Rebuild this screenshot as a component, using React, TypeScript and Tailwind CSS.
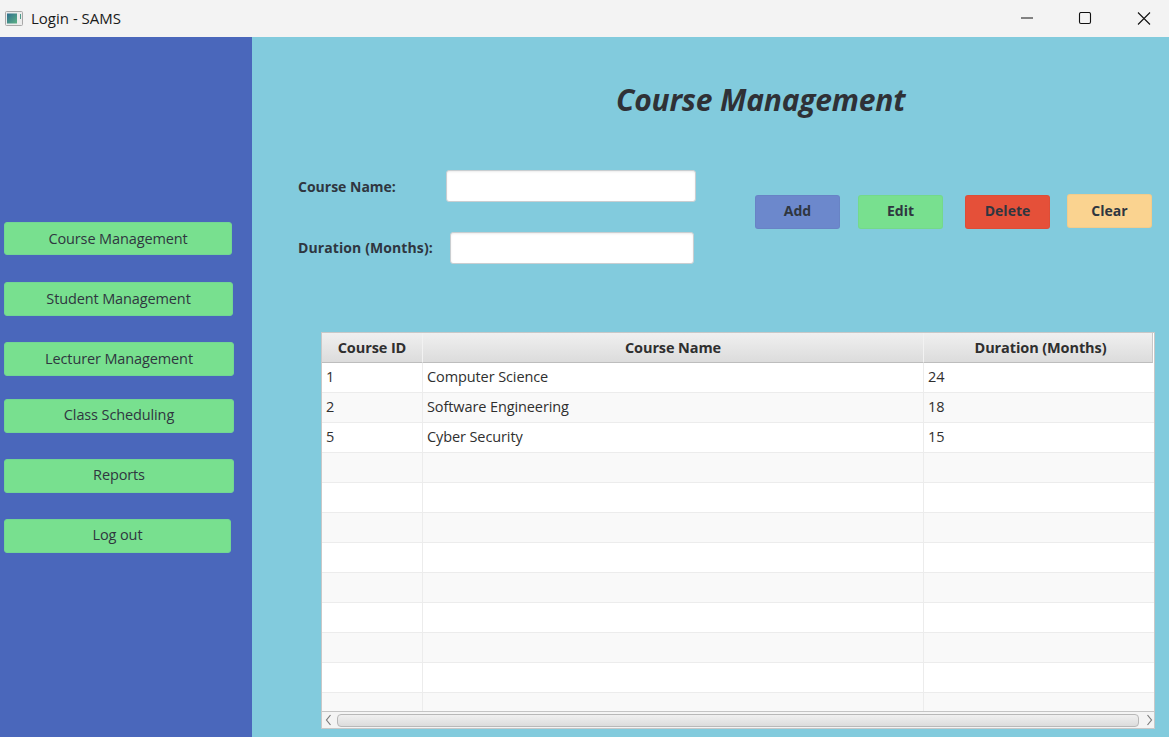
const F = "font-['Open_Sans','Noto_Sans',sans-serif]";

const side = [
  { t: "Course Management", c: "mt-[185px] w-[228px] h-[33px]" },
  { t: "Student Management", c: "mt-[27px] w-[229px] h-[34px]" },
  { t: "Lecturer Management", c: "mt-[26px] w-[230px] h-[34px]" },
  { t: "Class Scheduling", c: "mt-[23px] w-[230px] h-[34px] pb-[2px]" },
  { t: "Reports", c: "mt-[26px] w-[230px] h-[34px] pb-[2px]" },
  { t: "Log out", c: "mt-[26px] w-[227px] h-[34px] pb-[2px]" },
];

const rows: string[][] = [
  ["1", "Computer Science", "24"],
  ["2", "Software Engineering", "18"],
  ["5", "Cyber Security", "15"],
  ["", "", ""], ["", "", ""], ["", "", ""], ["", "", ""], ["", "", ""], ["", "", ""], ["", "", ""], ["", "", ""], ["", "", ""],
];

function TitleBar() {
  return (
    <div className="h-[37px] shrink-0 bg-[#f3f3f3] flex items-center pl-[5px]">
      <svg width="18" height="15" viewBox="0 0 18 15" className="shrink-0">
        <rect x="0.5" y="0.5" width="17" height="14" rx="1" fill="#ececec" stroke="#a8a8a8" />
        <defs>
          <linearGradient id="ic" x1="0" y1="0" x2="1" y2="1">
            <stop offset="0" stopColor="#2f6f8f" />
            <stop offset="1" stopColor="#5cb184" />
          </linearGradient>
        </defs>
        <rect x="2" y="2.5" width="10" height="10" fill="url(#ic)" />
        <rect x="15" y="3" width="1" height="5" fill="#4f9a8a" />
      </svg>
      <span className="ml-[8px] text-[15px] text-[#1a1a1a]">Login - SAMS</span>
      <div className="ml-auto flex items-center">
        <svg width="14" height="14" viewBox="0 0 14 14" className="mr-[44px]"><path d="M1 6h12" stroke="#111" strokeWidth="1" /></svg>
        <svg width="14" height="14" viewBox="0 0 14 14" className="mr-[45px]"><rect x="1.5" y="0.5" width="11" height="11" rx="1.5" fill="none" stroke="#111" strokeWidth="1.1" /></svg>
        <svg width="14" height="14" viewBox="0 0 14 14" className="mr-[18px]"><path d="M1 0.5l12 12M13 0.5L1 12.5" stroke="#111" strokeWidth="1.1" /></svg>
      </div>
    </div>
  );
}

function Sidebar() {
  return (
    <div className="w-[252px] shrink-0 bg-[#4a67bb] flex flex-col pl-[4px]">
      {side.map((s) => (
        <button key={s.t} className={`${s.c} shrink-0 rounded-[3px] bg-[#78e08f] border border-[#72d793] text-[14.5px] tracking-[-0.12px] text-[#2f3640] flex items-center justify-center`}>
          {s.t}
        </button>
      ))}
    </div>
  );
}

function Input({ c }: { c: string }) {
  return <div className={`${c} h-[32px] rounded-[3px] bg-white border border-[#c9ced1] shadow-[inset_0_1px_2px_rgba(0,0,0,0.08)]`} />;
}

function Action({ t, c }: { t: string; c: string }) {
  return (
    <button className={`${c} w-[85px] h-[34px] rounded-[3px] border border-black/[0.03] text-[14px] font-bold text-[#2f3640] flex items-center justify-center`}>
      {t}
    </button>
  );
}

function Chevron({ d, c }: { d: string; c?: string }) {
  return <svg width="7" height="12" viewBox="0 0 7 12" className={c}><path d={d} fill="none" stroke="#7a7a7a" strokeWidth="1.2" /></svg>;
}

function Table() {
  const cols = ["w-[101px]", "w-[501px]", "flex-1 pl-[5px]"];
  const heads = ["Course ID", "Course Name", "Duration (Months)"];
  const bodyCols = ["w-[101px]", "w-[501px]", "flex-1"];
  return (
    <div className="ml-[69px] w-[834px] h-[397px] bg-white border border-[#c8c8c8] flex flex-col overflow-hidden">
      <div className="h-[30px] shrink-0 flex pr-[1px] bg-white">
        {heads.map((h, i) => (
          <div key={h} className={`${cols[i]} ${i === 2 ? "border-r border-r-[#c8c8c8]" : "border-r border-r-[#f2f2f2]"} border-b border-b-[#bdbdbd] bg-gradient-to-b from-[#f0f0f0] to-[#dcdcdc] flex items-center justify-center text-[14.5px] font-bold tracking-[-0.1px] text-[#2f2f2f]`}>
            {h}
          </div>
        ))}
      </div>
      <div className="flex-1 min-h-0 overflow-hidden">
        {rows.map((r, i) => (
          <div key={i} className={`h-[30px] flex border-b border-b-[#ececec] ${i % 2 === 0 ? "bg-white" : "bg-[#f9f9f9]"}`}>
            {r.map((v, j) => (
              <div key={j} className={`${bodyCols[j]} ${j < 2 ? "border-r border-r-[#ececec]" : ""} pl-[4px] pb-[2px] flex items-center text-[14.5px] tracking-[-0.1px] text-[#2f2f2f]`}>
                {v}
              </div>
            ))}
          </div>
        ))}
      </div>
      <div className="h-[17px] shrink-0 bg-[#f4f4f4] border-t border-t-[#c4c4c4] flex items-center pl-[3px]">
        <Chevron d="M5.5 1L1.5 6L5.5 11" />
        <div className="ml-[5px] h-[13px] w-[802px] rounded-[4px] border border-[#b8b8b8] bg-gradient-to-b from-[#f0f0f0] to-[#dcdcdc]" />
        <Chevron c="ml-[7px]" d="M1.5 1L5.5 6L1.5 11" />
      </div>
    </div>
  );
}

export default function App() {
  return (
    <div className={`${F} w-[1169px] h-[737px] flex flex-col overflow-hidden`}>
      <TitleBar />
      <div className="flex-1 min-h-0 flex">
        <Sidebar />
        <div className="flex-1 bg-[#82cbdd] flex flex-col">
          <h1 className="mt-[43px] ml-[364px] h-[40px] flex items-center text-[30px] leading-none font-bold italic tracking-[-0.2px] text-[#2f3136]">
            Course Management
          </h1>
          <div className="mt-[50px] flex">
            <div className="ml-[46px] flex flex-col">
              <div className="flex items-center">
                <span className="w-[148px] text-[14px] font-bold text-[#2f3640]">Course Name:</span>
                <Input c="w-[250px]" />
              </div>
              <div className="mt-[30px] flex items-center">
                <span className="w-[152px] pb-[2px] text-[14px] font-bold tracking-[0.1px] text-[#2f3640]">Duration (Months):</span>
                <Input c="w-[244px]" />
              </div>
            </div>
            <div className="ml-[59px] mt-[25px] flex items-start">
              <Action t="Add" c="pb-[4px] bg-[#6c88cc]" />
              <Action t="Edit" c="ml-[18px] pb-[4px] bg-[#78e08f]" />
              <Action t="Delete" c="ml-[22px] pb-[4px] bg-[#e55039]" />
              <Action t="Clear" c="ml-[17px] -mt-[1px] pb-[2px] bg-[#fad390]" />
            </div>
          </div>
          <div className="mt-[68px]">
            <Table />
          </div>
        </div>
      </div>
    </div>
  );
}
